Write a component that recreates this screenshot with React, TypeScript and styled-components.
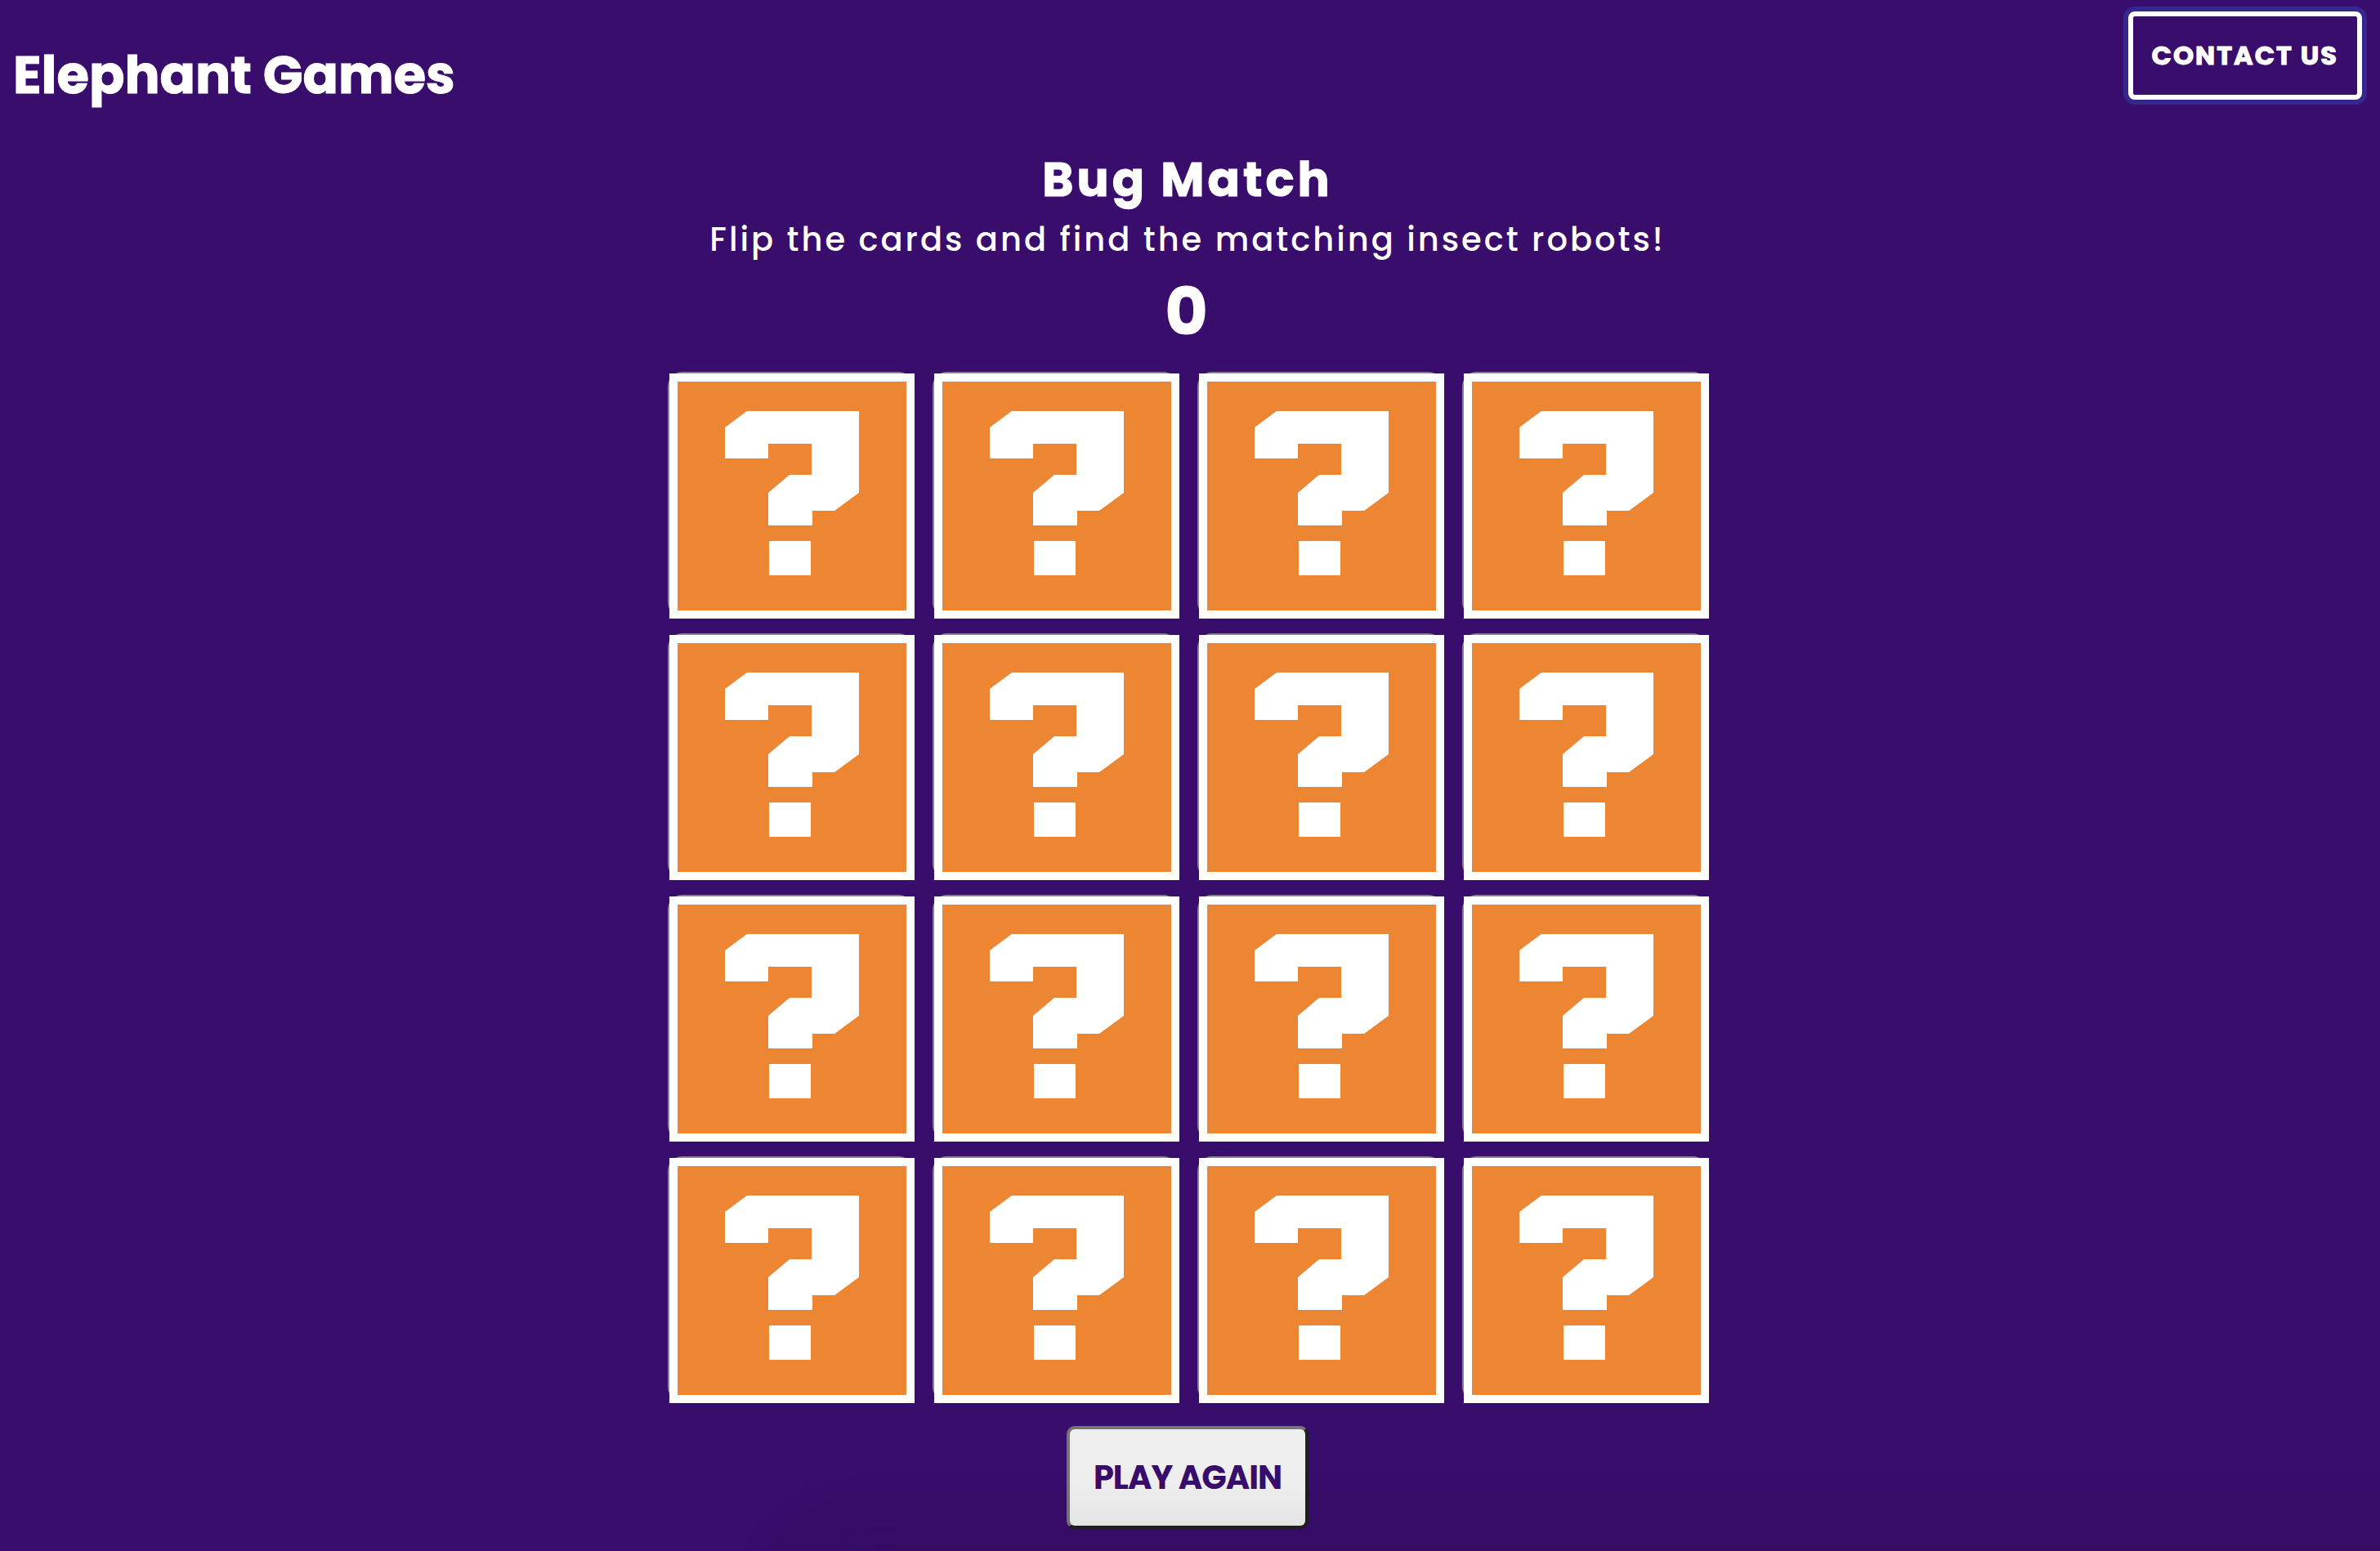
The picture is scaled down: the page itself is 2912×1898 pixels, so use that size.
import React, { useState } from "react";
import styled, { createGlobalStyle, css } from "styled-components";

const purple = "#380d6b";
const orange = "#ec8633";

const heavy = css`
  font-weight: 700;
  -webkit-text-stroke: 1px currentColor;
`;

const GlobalStyle = createGlobalStyle`
  * { box-sizing: border-box; }
  body {
    margin: 0;
    background: ${purple};
    color: #fff;
    font-family: Poppins, Inter, "Open Sans", sans-serif;
  }
  h1, h2, p { margin: 0; }
`;

const Page = styled.div`
  position: relative;
  min-height: 100vh;
  padding: 14px 22px 0 16px;
  overflow: hidden;
`;

const Header = styled.header`
  display: flex;
  justify-content: space-between;
  align-items: flex-start;
`;

const Brand = styled.h1`
  ${heavy}
  padding-top: 36px;
  font-size: 64px;
  line-height: 84px;
`;

const ContactButton = styled.button`
  height: 108px;
  padding: 0 23px;
  border: 6px solid #fff;
  border-radius: 8px;
  box-shadow: 0 0 0 6px #35278d;
  background: transparent;
  color: #fff;
  font: inherit;
  ${heavy}
  font-size: 32px;
  letter-spacing: 2px;
  text-transform: uppercase;
  white-space: nowrap;
  cursor: pointer;
`;

const Game = styled.main`
  display: flex;
  flex-direction: column;
  align-items: center;
  padding-top: 48px;
`;

const Title = styled.h2`
  ${heavy}
  font-size: 58px;
  line-height: 76px;
  letter-spacing: 4px;
`;

const Intro = styled.p`
  font-size: 40px;
  line-height: 71px;
  font-weight: 500;
  letter-spacing: 3px;
`;

const Score = styled.output`
  ${heavy}
  font-size: 80px;
  line-height: 104px;
  letter-spacing: 3px;
`;

const Board = styled.div`
  display: grid;
  grid-template-columns: repeat(4, 300px);
  gap: 20px 24px;
  padding: 24px 0 28px 4px;
`;

const CardButton = styled.button`
  height: 300px;
  padding: 0;
  border: 0;
  border-radius: 18px;
  box-shadow: -2px -2px 0 #868686;
  background: none;
  cursor: pointer;
`;

const CardFace = styled.svg`
  display: block;
  width: 100%;
  height: 100%;
`;

const PlayButton = styled.button`
  width: 296px;
  height: 126px;
  border: 4px solid;
  border-color: #767676 #212121 #212121 #767676;
  border-radius: 10px;
  background: #efefef;
  color: ${purple};
  font: inherit;
  font-size: 40px;
  font-weight: 700;
  letter-spacing: -1px;
  text-transform: uppercase;
  white-space: nowrap;
  cursor: pointer;
`;

/* Soft shade that rises from under the bottom edge, over the page. */
const BottomShade = styled.div`
  position: absolute;
  top: 100%;
  left: 34%;
  right: -200px;
  height: 200px;
  border-radius: 40px;
  box-shadow: 0 0 100px rgba(0, 0, 0, 0.18);
  pointer-events: none;
`;

function QuestionCard({ label }: { label: string }) {
  return (
    <CardButton type="button" aria-label={label}>
      <CardFace viewBox="0 0 300 300" aria-hidden="true">
        <rect width="300" height="300" fill="#fff" />
        <rect x="10" y="10" width="280" height="280" fill={orange} />
        <path
          fill="#fff"
          d="M95 46H232V146L202 168H175V186H121V146L147 124H174V86H121V104H68V66ZM122 205H173V247H122Z"
        />
      </CardFace>
    </CardButton>
  );
}

export default function App() {
  const [score, setScore] = useState(0);
  return (
    <Page>
      <GlobalStyle />
      <Header>
        <Brand>Elephant Games</Brand>
        <ContactButton type="button">Contact us</ContactButton>
      </Header>
      <Game>
        <Title>Bug Match</Title>
        <Intro>Flip the cards and find the matching insect robots!</Intro>
        <Score>{score}</Score>
        <Board>
          {Array.from({ length: 16 }, (_, i) => (
            <QuestionCard key={i} label={`Card ${i + 1}`} />
          ))}
        </Board>
        <PlayButton type="button" onClick={() => setScore(0)}>
          Play again
        </PlayButton>
      </Game>
      <BottomShade />
    </Page>
  );
}
